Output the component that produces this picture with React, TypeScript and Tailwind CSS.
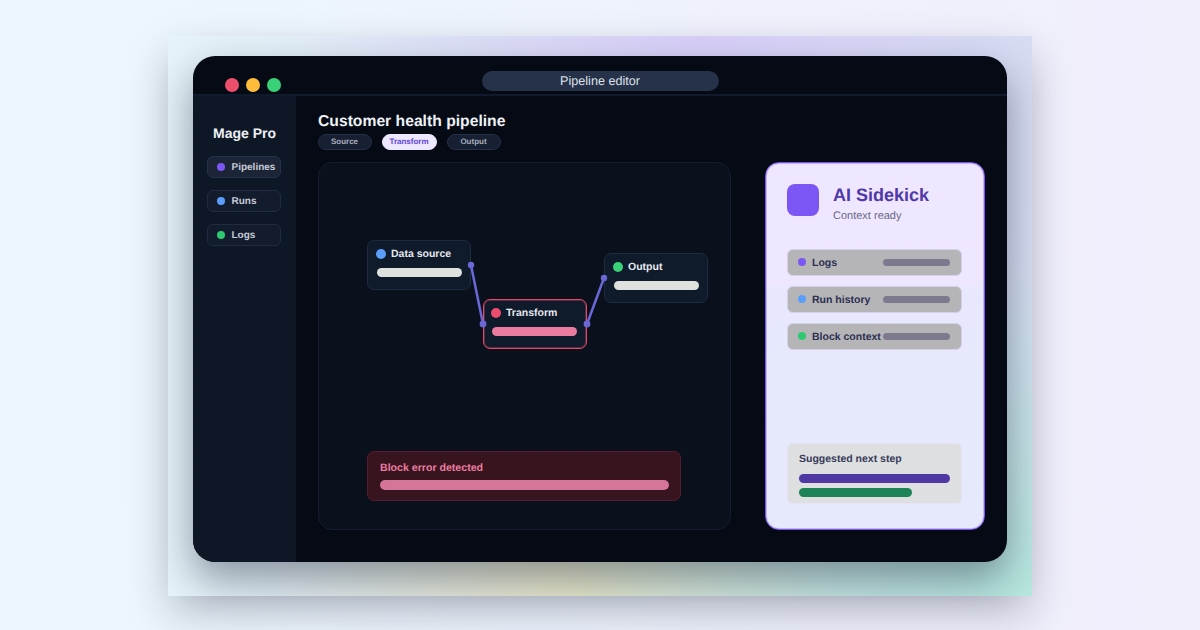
import React from "react";

const arial = "font-['Liberation_Sans',Arial,sans-serif] [text-rendering:geometricPrecision]";

function Side({ color, label, active }: { color: string; label: string; active?: boolean }) {
  return (
    <div className={`flex h-[22px] w-[74px] items-center gap-[7px] rounded-[6px] border pl-[9px] ${active ? "border-[#253049] bg-[#1c2537]" : "border-[#212c41] bg-[#131c2d]"}`}>
      <span className={`h-2 w-2 rounded-full ${color}`} />
      <span className="pt-[1px] text-[10px] font-bold text-[#c6cbd6]">{label}</span>
    </div>
  );
}

function Tab({ label, active, w }: { label: string; active?: boolean; w: string }) {
  return (
    <div className={`flex h-4 items-center justify-center rounded-full border pr-[1px] text-[8px] font-bold ${w} ${active ? "border-[#ede7ff] bg-[#ede7ff] text-[#6243dc]" : "border-[#263047] bg-[#162032] text-[#a9aebd]"}`}>
      {label}
    </div>
  );
}

function Node({ pos, color, label, bar, red }: { pos: string; color: string; label: string; bar: string; red?: boolean }) {
  return (
    <div className={`absolute h-[50px] w-[104px] rounded-[7px] border bg-[#0f1a2b] pt-[6px] ${pos} ${red ? "border-[#e14a69] pl-[7px] shadow-[inset_0_0_0_1px_rgba(225,74,105,0.35)]" : "border-[#1f2b40] pl-[8px]"}`}>
      <div className="flex h-[14px] items-center gap-[5px]">
        <span className={`h-[10px] w-[10px] rounded-full ${color}`} />
        <span className="pt-[2px] text-[10.5px] font-bold text-[#e6e9ef]">{label}</span>
      </div>
      <div className={`ml-[1px] mt-[7px] h-[9px] w-[85px] rounded-full ${bar}`} />
    </div>
  );
}

function Row({ color, label }: { color: string; label: string }) {
  return (
    <div className="flex h-[27px] w-[175px] items-center rounded-[6px] border border-[#d5cfe8] bg-[#b5b5b8] pl-[10px]">
      <span className={`-mt-[1px] h-2 w-2 shrink-0 rounded-full ${color}`} />
      <span className="ml-[6px] w-[71px] shrink-0 whitespace-nowrap pt-[2px] text-[10.5px] font-bold text-[#2b2e50]">{label}</span>
      <span className="h-[7px] w-[67px] shrink-0 rounded-full bg-[#7d7a90]" />
    </div>
  );
}

export default function App() {
  return (
    <div className={`flex h-[630px] w-[1200px] items-start justify-center overflow-hidden bg-gradient-to-r from-[#ebf7fd] to-[#f1eefc] pt-[36px] ${arial}`}>
      <div className="h-[560px] w-[864px] bg-[radial-gradient(ellipse_at_62%_0%,#d8cff9_0%,rgba(216,207,249,0)_55%),radial-gradient(ellipse_at_100%_100%,#b6e8de_0%,rgba(182,232,222,0)_40%),radial-gradient(ellipse_at_48%_100%,#ece9cb_0%,rgba(236,233,203,0)_50%),linear-gradient(90deg,#e6f3f9_0%,#d6dff2_100%)] px-[25px] pt-[20px] shadow-[0_18px_40px_rgba(15,23,42,0.22)]">
        <div className="flex h-[506px] w-[814px] flex-col overflow-hidden rounded-[22px] bg-[#050a14] shadow-[0_18px_40px_rgba(15,23,42,0.42)]">
          <div className="relative flex h-[40px] shrink-0 items-start justify-center border-b-2 border-[#101a2c] pt-[15px]">
            <div className="absolute left-[32px] top-[22px] flex gap-[7px]">
              <span className="h-[14px] w-[14px] rounded-full bg-[#ed4f6b]" />
              <span className="h-[14px] w-[14px] rounded-full bg-[#fdbd3b]" />
              <span className="h-[14px] w-[14px] rounded-full bg-[#38d178]" />
            </div>
            <div className="flex h-5 w-[237px] items-center justify-center rounded-full bg-[#26324a] pt-[1px] text-[12.6px] text-[#dde1e8]">Pipeline editor</div>
          </div>
          <div className="flex min-h-0 flex-1">
            <div className="flex w-[103px] shrink-0 flex-col items-center bg-[#0d1726] pt-[27px]">
              <div className="text-[14px] leading-[20px] font-bold text-[#eef0f5]">Mage Pro</div>
              <div className="mt-[13px] -ml-[2px] flex flex-col gap-3">
                <Side color="bg-[#7c55f5]" label="Pipelines" active />
                <Side color="bg-[#5a9dfb]" label="Runs" />
                <Side color="bg-[#2ec971]" label="Logs" />
              </div>
            </div>
            <div className="flex min-w-0 flex-1 gap-[34px] pl-[22px] pt-[16px]">
              <div className="flex w-[413px] shrink-0 flex-col">
                <div className="text-[15.7px] leading-[20px] font-bold text-[#eef1f6]">Customer health pipeline</div>
                <div className="mt-[2px] flex gap-[10px]">
                  <Tab label="Source" w="w-[54px]" />
                  <Tab label="Transform" active w="w-[55px]" />
                  <Tab label="Output" w="w-[54px]" />
                </div>
                <div className="relative mt-[12px] h-[368px] rounded-[14px] border border-[#141e30] bg-[#0a101c]">
                  <Node pos="left-[48px] top-[77px]" color="bg-[#5a9dfb]" label="Data source" bar="bg-[#dfe1df]" />
                  <Node pos="left-[164px] top-[136px]" color="bg-[#ed4d6c]" label="Transform" bar="bg-[#ea7ca0]" red />
                  <Node pos="left-[285px] top-[90px]" color="bg-[#38d178]" label="Output" bar="bg-[#dfe1df]" />
                  <svg className="absolute left-0 top-0" width="411" height="366" viewBox="0 0 411 366">
                    <g transform="translate(-319 -163)" stroke="#6a68d6" strokeWidth="2.5" fill="#6a68d6">
                      <line x1="471" y1="265" x2="483" y2="324" />
                      <line x1="587" y1="324" x2="604" y2="278" />
                      <circle cx="471" cy="265" r="3.2" stroke="none" />
                      <circle cx="483" cy="324" r="3.4" stroke="none" />
                      <circle cx="587" cy="324" r="3.4" stroke="none" />
                      <circle cx="604" cy="278" r="3.2" stroke="none" />
                    </g>
                  </svg>
                  <div className="absolute left-[48px] top-[288px] h-[50px] w-[314px] rounded-[7px] border border-[#521d30] bg-[#38141f] pl-[12px] pr-[11px] pt-[9px]">
                    <div className="text-[10.6px] leading-[14px] font-bold text-[#ea7ca0]">Block error detected</div>
                    <div className="mt-[5px] h-[10px] rounded-full bg-[#d6759a]" />
                  </div>
                </div>
              </div>
              <div className="mt-[50px] flex h-[368px] w-[220px] shrink-0 flex-col self-start rounded-[14px] border border-[#7a55ee] bg-[linear-gradient(180deg,#efe6ff_0%,#efe6ff_31%,#e7e8fd_36%,#e6e9fb_100%)] pb-[25px] pl-[21px] pt-[21px] shadow-[inset_0_0_0_1px_rgba(122,85,238,0.35)]">
                <div className="flex items-start gap-[14px]">
                  <div className="h-[32px] w-[32px] rounded-[8px] bg-[#7c55f5]" />
                  <div>
                    <div className="text-[18px] leading-[22px] font-bold text-[#4f39a8]">AI Sidekick</div>
                    <div className="mt-[3px] text-[11px] leading-[14px] text-[#686a82]">Context ready</div>
                  </div>
                </div>
                <div className="mt-[26px] flex flex-col gap-[10px]">
                  <Row color="bg-[#7c55f5]" label="Logs" />
                  <Row color="bg-[#5a9dfb]" label="Run history" />
                  <Row color="bg-[#2ec971]" label="Block context" />
                </div>
                <div className="mt-auto h-[61px] w-[175px] rounded-[6px] border border-[#e6e2f8] bg-[#dddfe0] px-[11px] pt-[8px]">
                  <div className="pt-[1px] text-[10.5px] leading-[13px] font-bold text-[#373a5a]">Suggested next step</div>
                  <div className="mt-[8px] h-[9px] w-[151px] rounded-full bg-[#5038a4]" />
                  <div className="mt-[5px] h-[9px] w-[113px] rounded-full bg-[#1e8458]" />
                </div>
              </div>
            </div>
          </div>
        </div>
      </div>
    </div>
  );
}
